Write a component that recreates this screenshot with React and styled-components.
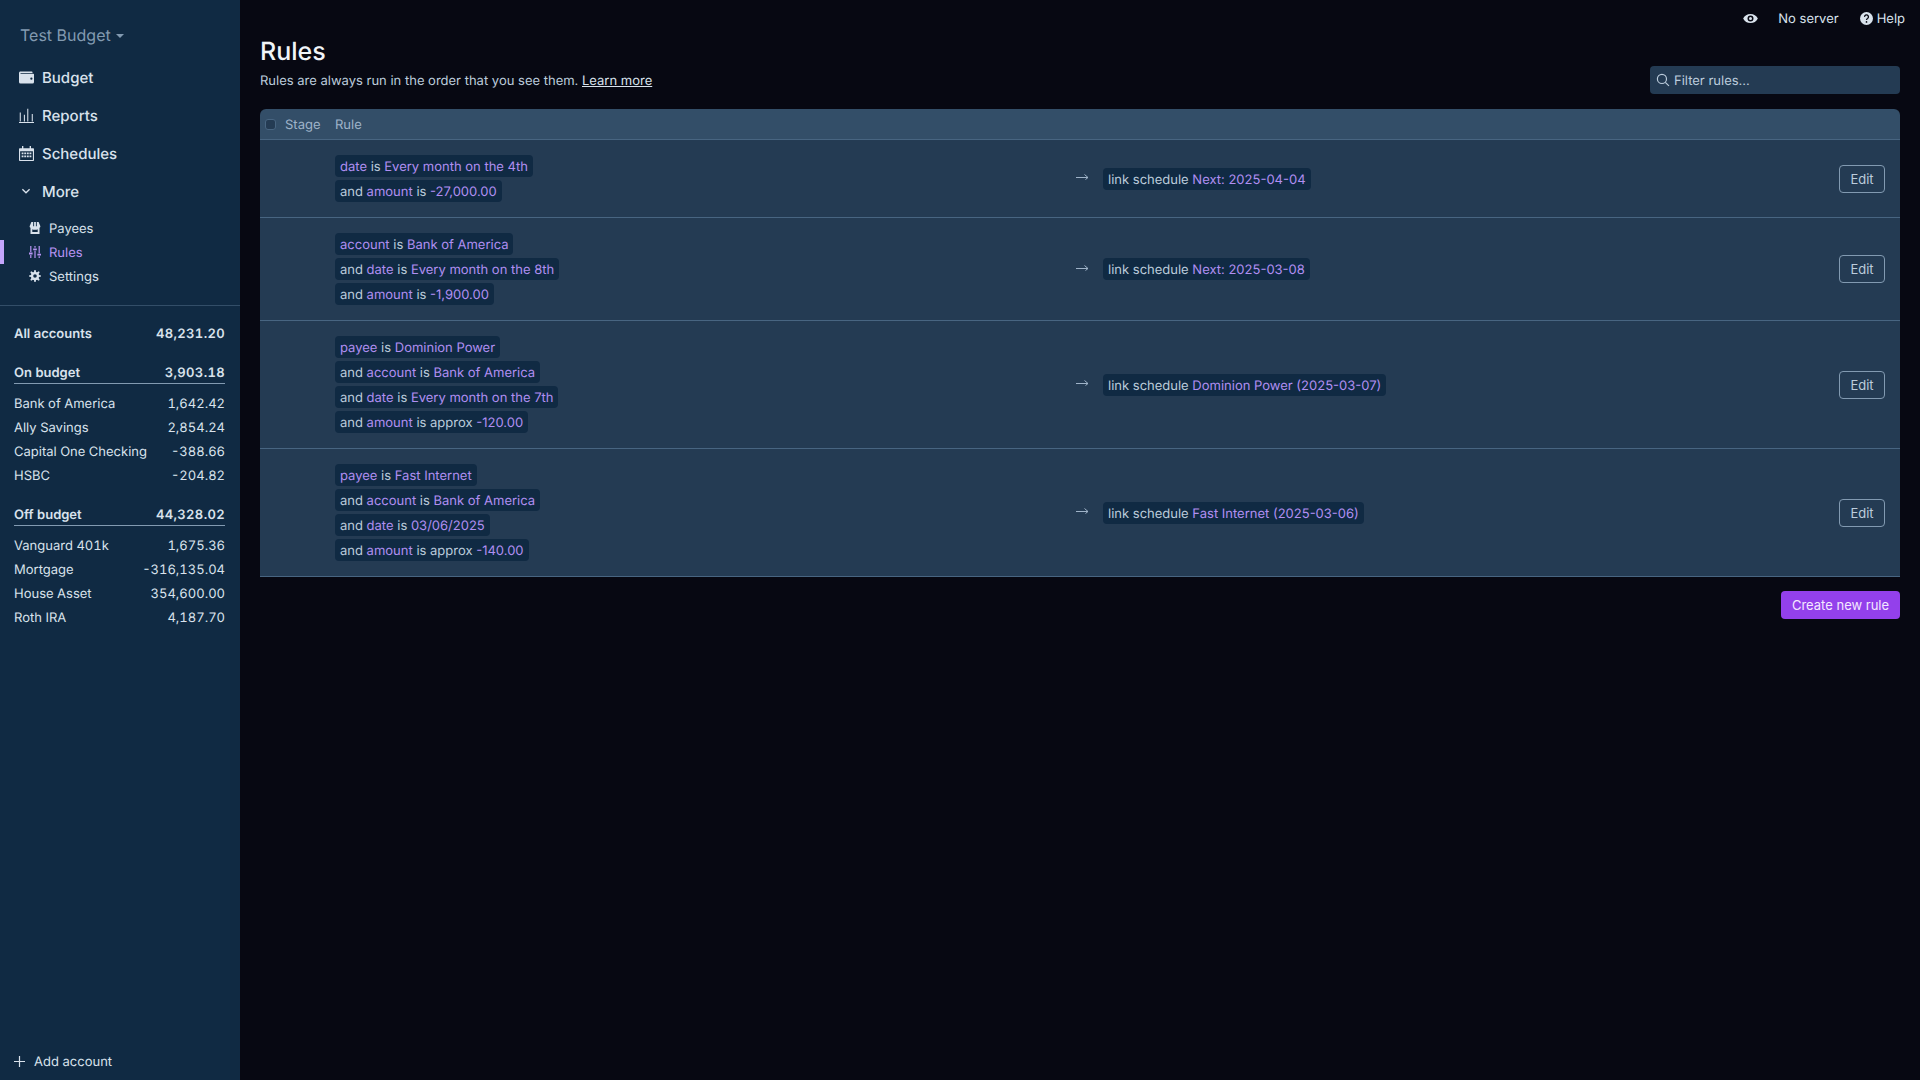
import React from "react";
import styled, { createGlobalStyle } from "styled-components";

const GlobalStyle = createGlobalStyle`
  html, body {
    margin: 0;
    height: 100%;
    background: #070812;
  }
  body {
    font-family: Inter, "Noto Sans", sans-serif;
    font-size: 13px;
    color: #bcccdc;
    text-rendering: geometricPrecision;
    -webkit-font-smoothing: antialiased;
  }
  #root {
    height: 100%;
  }
  * {
    box-sizing: border-box;
  }
`;

const accounts = {
  onBudget: [
    ["Bank of America", "1,642.42"],
    ["Ally Savings", "2,854.24"],
    ["Capital One Checking", "-388.66"],
    ["HSBC", "-204.82"],
  ],
  offBudget: [
    ["Vanguard 401k", "1,675.36"],
    ["Mortgage", "-316,135.04"],
    ["House Asset", "354,600.00"],
    ["Roth IRA", "4,187.70"],
  ],
};

const rules = [
  {
    conditions: [
      ["date", "is", "Every month on the 4th"],
      ["amount", "is", "-27,000.00"],
    ],
    schedule: "Next: 2025-04-04",
  },
  {
    conditions: [
      ["account", "is", "Bank of America"],
      ["date", "is", "Every month on the 8th"],
      ["amount", "is", "-1,900.00"],
    ],
    schedule: "Next: 2025-03-08",
  },
  {
    conditions: [
      ["payee", "is", "Dominion Power"],
      ["account", "is", "Bank of America"],
      ["date", "is", "Every month on the 7th"],
      ["amount", "is approx", "-120.00"],
    ],
    schedule: "Dominion Power (2025-03-07)",
  },
  {
    conditions: [
      ["payee", "is", "Fast Internet"],
      ["account", "is", "Bank of America"],
      ["date", "is", "03/06/2025"],
      ["amount", "is approx", "-140.00"],
    ],
    schedule: "Fast Internet (2025-03-06)",
  },
];

const WalletIcon = () => (
  <svg width="15" height="15" viewBox="0 0 20 20" fill="currentColor">
    <path d="M0 4c0-1.100.9-2 2-2h15a1 1 0 0 1 1 1v1H2v1h17a1 1 0 0 1 1 1v10a2 2 0 0 1-2 2H2a2 2 0 0 1-2-2V4zm16.500 9a1.500 1.500 0 1 0 0-3 1.500 1.500 0 0 0 0 3z" fillRule="evenodd" />
  </svg>
);

const ChartIcon = () => (
  <svg width="15" height="15" viewBox="0 0 20 20" fill="currentColor">
    <path d="M0 18.600h20V20H0zM1 6h1.400v12H1zM6.500 9h1.400v9H6.500zM11 1h1.400v17H11zM17 8h1.400v10H17z" />
  </svg>
);

const CalendarIcon = () => (
  <svg width="15" height="15" viewBox="0 0 20 20" fill="currentColor">
    <path fillRule="evenodd" d="M1 3h3V0h1.800v3h8.400V0H16v3h3a1 1 0 0 1 1 1v15a1 1 0 0 1-1 1H1a1 1 0 0 1-1-1V4a1 1 0 0 1 1-1zM1.500 7v11.500h17V7z" />
    <path d="M3.500 8.500h2.500V11H3.500zM7 8.500h2.500V11H7zM10.500 8.500H13V11h-2.500zM14 8.500h2.500V11H14zM3.500 12.500h2.500V15H3.500zM7 12.500h2.500V15H7zM10.500 12.500H13V15h-2.500zM14 12.500h2.500V15H14z" />
  </svg>
);

const ChevronIcon = () => (
  <svg width="12" height="12" viewBox="0 0 20 20" fill="none" stroke="currentColor" strokeWidth="2.200">
    <path d="M4 7l6 6 6-6" />
  </svg>
);

const StoreIcon = () => (
  <svg width="12" height="12" viewBox="0 0 20 20" fill="currentColor">
    <path fillRule="evenodd" d="M4 0h12l3 7a3 3 0 0 1-1.500 2.600V20h-15V9.600A3 3 0 0 1 1 7zM5.500 12v4.500h9V12c-1.600 1.200-7.400 1.200-9 0z" />
    <path d="M7 0h1.500v7H7zM11.500 0H13v7h-1.500z" fill="#102a43" />
  </svg>
);

const TuningIcon = () => (
  <svg width="12" height="12" viewBox="0 0 20 20" fill="currentColor">
    <path d="M2 0h2v10H2zM2 15h2v5H2zM0 11h6v3H0zM9 0h2v3H9zM9 8h2v12H9zM7 4h6v3H7zM16 0h2v12h-2zM16 17h2v3h-2zM14 13h6v3h-6z" />
  </svg>
);

const CogIcon = () => (
  <svg width="12" height="12" viewBox="0 0 20 20" fill="currentColor">
    <path d="M3.940 6.500L2.220 3.640l1.420-1.420L6.500 3.940c.52-.3 1.100-.54 1.700-.7L9 0h2l.8 3.240c.6.160 1.180.4 1.700.7l2.860-1.720 1.420 1.420-1.720 2.860c.3.520.54 1.100.7 1.700L20 9v2l-3.240.8c-.16.600-.4 1.180-.7 1.700l1.720 2.860-1.420 1.420-2.860-1.720c-.52.3-1.100.54-1.700.7L11 20H9l-.8-3.240c-.6-.16-1.180-.4-1.700-.7l-2.860 1.720-1.420-1.420 1.720-2.860c-.3-.52-.54-1.100-.7-1.700L0 11V9l3.240-.8c.16-.6.4-1.180.7-1.700zM10 13a3 3 0 1 0 0-6 3 3 0 0 0 0 6z" />
  </svg>
);

const EyeIcon = () => (
  <svg width="15" height="15" viewBox="0 0 20 20" fill="currentColor">
    <path d="M.2 10a11 11 0 0 1 19.600 0A11 11 0 0 1 .2 10zm9.800 4a4 4 0 1 0 0-8 4 4 0 0 0 0 8zm0-2a2 2 0 1 1 0-4 2 2 0 0 1 0 4z" />
  </svg>
);

const HelpIcon = () => (
  <svg width="13" height="13" viewBox="0 0 20 20">
    <circle cx="10" cy="10" r="10" fill="currentColor" />
    <path d="M7 7.500a3 3 0 1 1 4.600 2.500c-1 .6-1.600 1.200-1.600 2.200" fill="none" stroke="#070812" strokeWidth="2" />
    <circle cx="10" cy="15.300" r="1.300" fill="#070812" />
  </svg>
);

const SearchIcon = () => (
  <svg width="14" height="14" viewBox="0 0 20 20" fill="none" stroke="currentColor" strokeWidth="1.700">
    <circle cx="8.500" cy="8.500" r="6.500" />
    <path d="M13.300 13.300L18.500 18.500" />
  </svg>
);

const ArrowIcon = () => (
  <svg width="13" height="9" viewBox="0 0 13 9" fill="none" stroke="currentColor" strokeWidth="1">
    <path d="M0 4.500h12M8.500 1.500l3.500 3-2.500 2" />
  </svg>
);

const PlusIcon = () => (
  <svg width="11" height="11" viewBox="0 0 11 11" fill="none" stroke="currentColor" strokeWidth="1.200">
    <path d="M5.500 0v11M0 5.500h11" />
  </svg>
);

const App = () => {
  return (
    <Page>
      <GlobalStyle />
      <Sidebar>
        <BudgetName>
          Test Budget <Caret />
        </BudgetName>
        <Nav>
          <NavItem><NavIcon><WalletIcon /></NavIcon>Budget</NavItem>
          <NavItem><NavIcon><ChartIcon /></NavIcon>Reports</NavItem>
          <NavItem><NavIcon><CalendarIcon /></NavIcon>Schedules</NavItem>
          <NavItem><NavIcon $inset><ChevronIcon /></NavIcon>More</NavItem>
        </Nav>
        <SubNav>
          <SubItem><StoreIcon />Payees</SubItem>
          <SubItem $active><TuningIcon />Rules</SubItem>
          <SubItem><CogIcon />Settings</SubItem>
        </SubNav>
        <Accounts>
          <TotalRow>
            <span>All accounts</span>
            <span>48,231.20</span>
          </TotalRow>
          <GroupRow>
            <span>On budget</span>
            <span>3,903.18</span>
          </GroupRow>
          {accounts.onBudget.map(([name, amount]) => (
            <AccountRow key={name}>
              <span>{name}</span>
              <span>{amount}</span>
            </AccountRow>
          ))}
          <GroupRow>
            <span>Off budget</span>
            <span>44,328.02</span>
          </GroupRow>
          {accounts.offBudget.map(([name, amount]) => (
            <AccountRow key={name}>
              <span>{name}</span>
              <span>{amount}</span>
            </AccountRow>
          ))}
        </Accounts>
        <AddAccount><PlusIcon />Add account</AddAccount>
      </Sidebar>

      <Main>
        <TitleBar>
          <EyeButton><EyeIcon /></EyeButton>
          <span>No server</span>
          <HelpButton><HelpIcon />Help</HelpButton>
        </TitleBar>
        <Content>
          <Title>Rules</Title>
          <HeaderRow>
            <Description>
              Rules are always run in the order that you see them. <LearnMore>Learn more</LearnMore>
            </Description>
            <Filter>
              <SearchIcon />
              Filter rules...
            </Filter>
          </HeaderRow>
          <Table>
            <TableHead>
              <Checkbox />
              <StageLabel>Stage</StageLabel>
              <span>Rule</span>
            </TableHead>
            {rules.map((rule) => (
              <Row key={rule.schedule}>
                <Conditions>
                  {rule.conditions.map(([field, op, value], i) => (
                    <Pill key={field}>
                      {i > 0 && "and "}
                      <Value>{field}</Value> {op} <Value>{value}</Value>
                    </Pill>
                  ))}
                </Conditions>
                <Arrow><ArrowIcon /></Arrow>
                <Actions>
                  <Pill>
                    link schedule <Value>{rule.schedule}</Value>
                  </Pill>
                </Actions>
                <EditButton>Edit</EditButton>
              </Row>
            ))}
          </Table>
          <Footer>
            <CreateButton>Create new rule</CreateButton>
          </Footer>
        </Content>
      </Main>
    </Page>
  );
};

export default App;

const Page = styled.div`
  display: flex;
  height: 1080px;
  overflow: hidden;
`;

const Sidebar = styled.aside`
  display: flex;
  flex-direction: column;
  width: 240px;
  flex-shrink: 0;
  background: #102a43;
`;

const BudgetName = styled.div`
  display: flex;
  align-items: center;
  gap: 5px;
  height: 20px;
  margin: 25px 0 0 20px;
  font-size: 16px;
  color: #829ab1;
`;

const Caret = styled.span`
  width: 0;
  height: 0;
  margin-top: 2px;
  border-left: 4px solid transparent;
  border-right: 4px solid transparent;
  border-top: 4px solid #829ab1;
`;

const Nav = styled.nav`
  display: flex;
  flex-direction: column;
  margin-top: 13px;
`;

const NavItem = styled.div`
  display: flex;
  align-items: center;
  height: 38px;
  padding-left: 19px;
  font-size: 15px;
  font-weight: 500;
  color: #d9e2ec;
`;

const NavIcon = styled.span`
  display: flex;
  width: 23px;
  padding-left: ${(props) => (props.$inset ? "1px" : "0")};
`;

const SubNav = styled.div`
  display: flex;
  flex-direction: column;
  margin-top: 6px;
  padding-bottom: 17px;
  border-bottom: 1px solid #334e68;
`;

const SubItem = styled.div`
  display: flex;
  align-items: center;
  gap: 8px;
  height: 24px;
  padding-top: 2px;
  padding-left: ${(props) => (props.$active ? "25px" : "29px")};
  border-left: ${(props) => (props.$active ? "4px solid #c4a5fb" : "none")};
  color: ${(props) => (props.$active ? "#b794f4" : "#d9e2ec")};
  svg {
    margin-top: -2px;
  }
`;

const Accounts = styled.div`
  display: flex;
  flex-direction: column;
  padding: 15px 15px 0 14px;
  font-variant-numeric: tabular-nums;
`;

const AccountRow = styled.div`
  display: flex;
  justify-content: space-between;
  align-items: center;
  height: 24px;
  padding-top: 2px;
  color: #d9e2ec;
`;

const TotalRow = styled(AccountRow)`
  font-weight: 600;
  margin-bottom: 15px;
  span:last-child {
    letter-spacing: 0.35px;
  }
`;

const GroupRow = styled(TotalRow)`
  margin-bottom: 7px;
  border-bottom: 1px solid #829ab1;
  &:not(:nth-child(2)) {
    margin-top: 15px;
  }
`;

const AddAccount = styled.div`
  display: flex;
  align-items: center;
  gap: 9px;
  margin-top: auto;
  height: 38px;
  padding: 2px 0 0 14px;
  color: #d9e2ec;
  svg {
    margin-top: -2px;
  }
`;

const Main = styled.main`
  display: flex;
  flex-direction: column;
  flex: 1;
  min-width: 0;
`;

const TitleBar = styled.div`
  display: flex;
  justify-content: flex-end;
  align-items: center;
  height: 36px;
  padding: 2px 15px 0 0;
  color: #d9e2ec;
  svg {
    margin-top: -2px;
  }
`;

const EyeButton = styled.span`
  display: flex;
  margin-right: 20px;
`;

const HelpButton = styled.span`
  display: flex;
  align-items: center;
  gap: 4px;
  margin-left: 21px;
`;

const Content = styled.div`
  display: flex;
  flex-direction: column;
  padding: 0 20px;
`;

const Title = styled.h1`
  margin: 0;
  height: 30px;
  font-size: 25px;
  line-height: 32px;
  font-weight: 500;
  color: #f0f4f8;
`;

const HeaderRow = styled.div`
  display: flex;
  justify-content: space-between;
  align-items: flex-end;
  height: 28px;
`;

const Description = styled.div`
  align-self: center;
  padding-top: 2px;
  color: #bcccdc;
`;

const LearnMore = styled.span`
  text-decoration: underline;
  color: #d9e2ec;
`;

const Filter = styled.div`
  display: flex;
  align-items: center;
  gap: 4px;
  width: 250px;
  height: 28px;
  padding: 2px 0 0 6px;
  border-radius: 4px;
  background: #243b53;
  color: #bcccdc;
  svg {
    margin-top: -2px;
  }
`;

const Table = styled.div`
  display: flex;
  flex-direction: column;
  margin-top: 15px;
`;

const TableHead = styled.div`
  display: flex;
  align-items: center;
  height: 31px;
  padding: 2px 0 0 5px;
  border-radius: 6px 6px 0 0;
  border-bottom: 1px solid #486581;
  background: #334e68;
  color: #9fb3c8;
`;

const Checkbox = styled.span`
  width: 11px;
  height: 11px;
  margin-top: -2px;
  border: 1px solid #486581;
  border-radius: 3px;
  background: #243b53;
`;

const StageLabel = styled.span`
  width: 50px;
  margin-left: 9px;
`;

const Row = styled.div`
  display: flex;
  align-items: center;
  padding: 15px 15px 15px 75px;
  border-bottom: 1px solid #486581;
  background: #243b53;
`;

const Conditions = styled.div`
  display: flex;
  flex-direction: column;
  align-items: flex-start;
  gap: 3px;
  width: 741px;
`;

const Pill = styled.div`
  height: 22px;
  padding: 0 5px;
  border-radius: 4px;
  background: #102a43;
  line-height: 24px;
  white-space: pre;
  color: #bcccdc;
`;

const Value = styled.span`
  color: #b08ff2;
`;

const Arrow = styled.span`
  display: flex;
  width: 27px;
  margin-top: -2px;
  color: #9fb3c8;
`;

const Actions = styled.div`
  flex: 1;
  display: flex;
`;

const EditButton = styled.button`
  width: 46px;
  height: 28px;
  padding: 0;
  border: 1px solid #829ab1;
  border-radius: 4px;
  background: transparent;
  font: inherit;
  color: #bcccdc;
`;

const Footer = styled.div`
  display: flex;
  justify-content: flex-end;
  margin-top: 14px;
`;

const CreateButton = styled.button`
  width: 119px;
  height: 28px;
  padding: 0;
  border: none;
  border-radius: 4px;
  background: #9340eb;
  font: inherit;
  color: #f3e8ff;
`;
